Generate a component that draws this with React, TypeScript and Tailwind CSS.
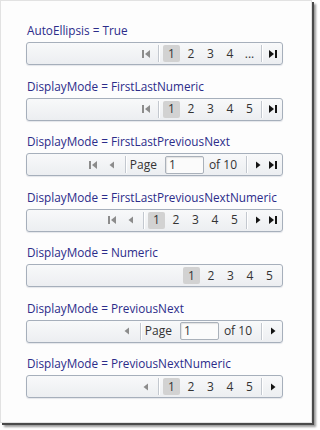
import React from 'react';

const font = { fontFamily: '"Open Sans", "Noto Sans", sans-serif' };

type Icon = 'first' | 'prev' | 'next' | 'last';

function PagerIcon({ kind, off, w }: { kind: Icon; off?: boolean; w: 'left' | 'right' }) {
  const fill = off ? '#8c8c8c' : '#141414';
  return (
    <span className={'flex h-[17px] items-center justify-center ' + (w === 'left' ? 'w-[19px]' : 'w-[15px]')}>
      <svg width="10" height="10" viewBox="0 0 10 10">
        {kind === 'first' && (
          <>
            <rect x="1" y="1" width="2" height="8" fill={fill} />
            <path d="M9 1 L4 5 L9 9 Z" fill={fill} />
          </>
        )}
        {kind === 'prev' && <path d="M7 1.5 L2.5 5 L7 8.5 Z" fill={fill} />}
        {kind === 'next' && <path d="M3 1.5 L7.5 5 L3 8.5 Z" fill={fill} />}
        {kind === 'last' && (
          <>
            <path d="M1 1 L6 5 L1 9 Z" fill={fill} />
            <rect x="7" y="1" width="2" height="8" fill={fill} />
          </>
        )}
      </svg>
    </span>
  );
}

function Sep({ left }: { left?: boolean }) {
  return (
    <span
      className={
        'h-[17px] w-px bg-[#c3c8cf] shadow-[1px_0_0_#ffffff] ' + (left ? 'ml-[3px] mr-[4px]' : 'mx-[3px]')
      }
    />
  );
}

function Num({ n, active }: { n: string; active?: boolean }) {
  return (
    <span
      className={
        'flex h-[17px] w-[17px] items-center justify-center rounded-[2px] text-[12px] text-[#333] ' +
        (active ? 'bg-[#d2d2d2]' : '')
      }
    >
      {n}
    </span>
  );
}

function Numbers({ items }: { items: string[] }) {
  return (
    <div className="flex items-center gap-[2.5px]">
      {items.map((n, i) => (
        <Num key={n} n={n} active={i === 0} />
      ))}
    </div>
  );
}

function PageBox() {
  return (
    <div className="mr-[6px] flex items-center text-[12px] text-[#333]">
      <span>Page</span>
      <span className="ml-[8px] flex h-[18px] w-[39px] items-center rounded-[2px] border border-[#aab1ba] bg-[#fbfbfb] pl-[3px] shadow-[inset_1px_1px_1px_#e2e2e2]">
        1
      </span>
      <span className="ml-[5px]">of 10</span>
    </div>
  );
}

function Bar({ children }: { children: React.ReactNode }) {
  return (
    <div className="flex h-[23px] w-[257px] items-center justify-end rounded-[3px] border border-[#a6afbb] bg-gradient-to-b from-[#f8f9fa] to-[#eceef1] pr-[2px] shadow-[0_1px_1px_#e4e6ea]">
      {children}
    </div>
  );
}

function Section({ label, children }: { label: string; children: React.ReactNode }) {
  return (
    <div className="flex flex-col">
      <div className="ml-[1px] h-[14px] text-[11.75px] leading-[14px] text-[#2c2c8a]">{label}</div>
      <div className="mt-[5px]">{children}</div>
    </div>
  );
}

export default function App() {
  const five = ['1', '2', '3', '4', '5'];
  return (
    <div className="h-[430px] w-[320px] bg-white" style={font}>
      <div className="flex h-[423px] w-[312px] flex-col gap-[13.5px] border border-[#e2e2e2] bg-[#fdfdfd] pl-[25px] pt-[22px] shadow-[2px_2px_0_#4a4a4a,4px_4px_2px_#9a9a9a]">
        <Section label="AutoEllipsis = True">
          <Bar>
            <PagerIcon kind="first" off w="left" />
            <Sep left />
            <Numbers items={['1', '2', '3', '4', '...']} />
            <Sep />
            <PagerIcon kind="last" w="right" />
          </Bar>
        </Section>
        <Section label="DisplayMode = FirstLastNumeric">
          <Bar>
            <PagerIcon kind="first" off w="left" />
            <Sep left />
            <Numbers items={five} />
            <Sep />
            <PagerIcon kind="last" w="right" />
          </Bar>
        </Section>
        <Section label="DisplayMode = FirstLastPreviousNext">
          <Bar>
            <PagerIcon kind="first" off w="left" />
            <PagerIcon kind="prev" off w="left" />
            <Sep left />
            <PageBox />
            <Sep />
            <PagerIcon kind="next" w="right" />
            <PagerIcon kind="last" w="right" />
          </Bar>
        </Section>
        <Section label="DisplayMode = FirstLastPreviousNextNumeric">
          <Bar>
            <PagerIcon kind="first" off w="left" />
            <PagerIcon kind="prev" off w="left" />
            <Sep left />
            <Numbers items={five} />
            <Sep />
            <PagerIcon kind="next" w="right" />
            <PagerIcon kind="last" w="right" />
          </Bar>
        </Section>
        <Section label="DisplayMode = Numeric">
          <Bar>
            <div className="mr-[2px]">
              <Numbers items={five} />
            </div>
          </Bar>
        </Section>
        <Section label="DisplayMode = PreviousNext">
          <Bar>
            <PagerIcon kind="prev" off w="left" />
            <Sep left />
            <PageBox />
            <Sep />
            <PagerIcon kind="next" w="right" />
          </Bar>
        </Section>
        <Section label="DisplayMode = PreviousNextNumeric">
          <Bar>
            <PagerIcon kind="prev" off w="left" />
            <Sep left />
            <Numbers items={five} />
            <Sep />
            <PagerIcon kind="next" w="right" />
          </Bar>
        </Section>
      </div>
    </div>
  );
}
